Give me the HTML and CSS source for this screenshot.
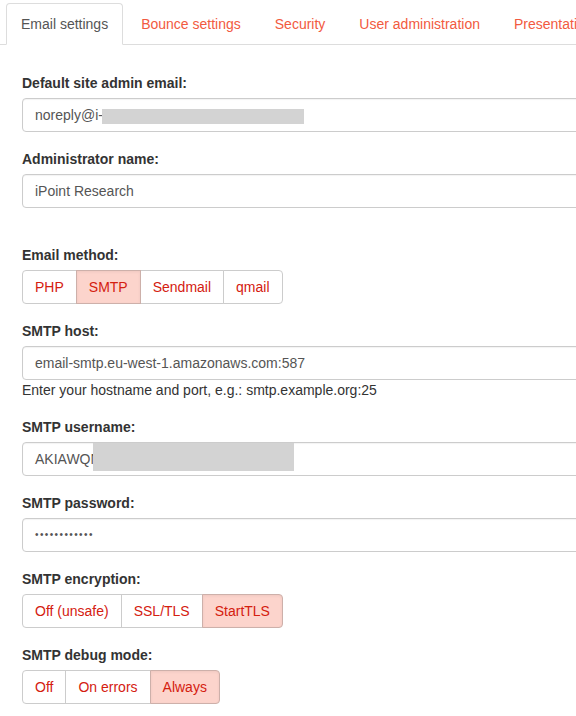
FILE: index.html
```html
<!DOCTYPE html>
<html>
<head>
<meta charset="utf-8">
<link rel="stylesheet" href="styles.css">
</head>
<body>
<div class="page">
  <ul class="tabs">
    <li class="tab active"><a>Email settings</a></li>
    <li class="tab"><a>Bounce settings</a></li>
    <li class="tab"><a>Security</a></li>
    <li class="tab"><a>User administration</a></li>
    <li class="tab"><a>Presentation</a></li>
  </ul>
  <div class="content">
    <div class="group">
      <div class="label">Default site admin email:</div>
      <div class="input">noreply@i-<span class="redact redact-email"></span></div>
    </div>
    <div class="group spaced">
      <div class="label">Administrator name:</div>
      <div class="input">iPoint Research</div>
    </div>
    <div class="group">
      <div class="label">Email method:</div>
      <div class="btn-group">
        <span class="btn">PHP</span><span class="btn on">SMTP</span><span class="btn">Sendmail</span><span class="btn">qmail</span>
      </div>
    </div>
    <div class="group">
      <div class="label">SMTP host:</div>
      <div class="input">email-smtp.eu-west-1.amazonaws.com:587</div>
      <div class="help">Enter your hostname and port, e.g.: smtp.example.org:25</div>
    </div>
    <div class="group">
      <div class="label">SMTP username:</div>
      <div class="input">AKIAWQN<span class="redact redact-user"></span></div>
    </div>
    <div class="group">
      <div class="label">SMTP password:</div>
      <div class="input password">••••••••••••</div>
    </div>
    <div class="group">
      <div class="label">SMTP encryption:</div>
      <div class="btn-group">
        <span class="btn">Off (unsafe)</span><span class="btn">SSL/TLS</span><span class="btn on">StartTLS</span>
      </div>
    </div>
    <div class="group">
      <div class="label">SMTP debug mode:</div>
      <div class="btn-group">
        <span class="btn">Off</span><span class="btn">On errors</span><span class="btn on">Always</span>
      </div>
    </div>
  </div>
</div>
</body>
</html>
```

FILE: styles.css
```css
html, body {
  margin: 0;
  padding: 0;
  background: #fff;
}
body {
  font-family: "Liberation Sans", Arial, Helvetica, sans-serif;
  font-size: 14px;
  line-height: 20px;
  color: #333;
  overflow: hidden;
}
.page {
  padding-top: 3px;
  width: 700px;
}
.tabs {
  list-style: none;
  margin: 0;
  padding: 0 0 0 6px;
  display: flex;
  border-bottom: 1px solid #ddd;
  white-space: nowrap;
}
.tab {
  margin-right: 2px;
  margin-bottom: -1px;
}
.tab a {
  display: block;
  padding: 10px 15px;
  border: 1px solid transparent;
  border-radius: 4px 4px 0 0;
  color: #f25a40;
}
.tab.active a {
  padding: 10px 14px;
  color: #555;
  background: #fff;
  border-color: #ddd #ddd transparent #ddd;
}
.content {
  padding: 28px 0 0 22px;
}
.group {
  margin-bottom: 17px;
}
.group.spaced {
  margin-bottom: 37px;
}
.label {
  font-weight: bold;
  margin-bottom: 5px;
  color: #333;
}
.input {
  position: relative;
  box-sizing: border-box;
  width: 600px;
  height: 34px;
  padding: 6px 12px;
  border: 1px solid #ccc;
  border-radius: 4px;
  color: #555;
  white-space: nowrap;
  box-shadow: inset 0 1px 1px rgba(0,0,0,0.05);
}
.password {
  font-size: 10px;
  letter-spacing: 1.4px;
}
.redact {
  position: absolute;
  background: #d3d3d3;
}
.redact-email {
  left: 79px;
  top: 10px;
  width: 202px;
  height: 15px;
}
.redact-user {
  left: 70px;
  top: 0;
  width: 201px;
  height: 28px;
}
.help {
  color: #333;
}
.btn-group {
  display: flex;
}
.btn {
  box-sizing: border-box;
  height: 34px;
  padding: 6px 12px;
  border: 1px solid #ccc;
  margin-left: -1px;
  color: #d4200f;
  background: #fff;
}
.btn:first-child {
  margin-left: 0;
  border-radius: 4px 0 0 4px;
}
.btn:last-child {
  border-radius: 0 4px 4px 0;
}
.btn.on {
  background: #fcd4cc;
  border-color: #cdb0aa;
  box-shadow: inset 0 1px 3px rgba(0,0,0,0.06);
  position: relative;
}
```
